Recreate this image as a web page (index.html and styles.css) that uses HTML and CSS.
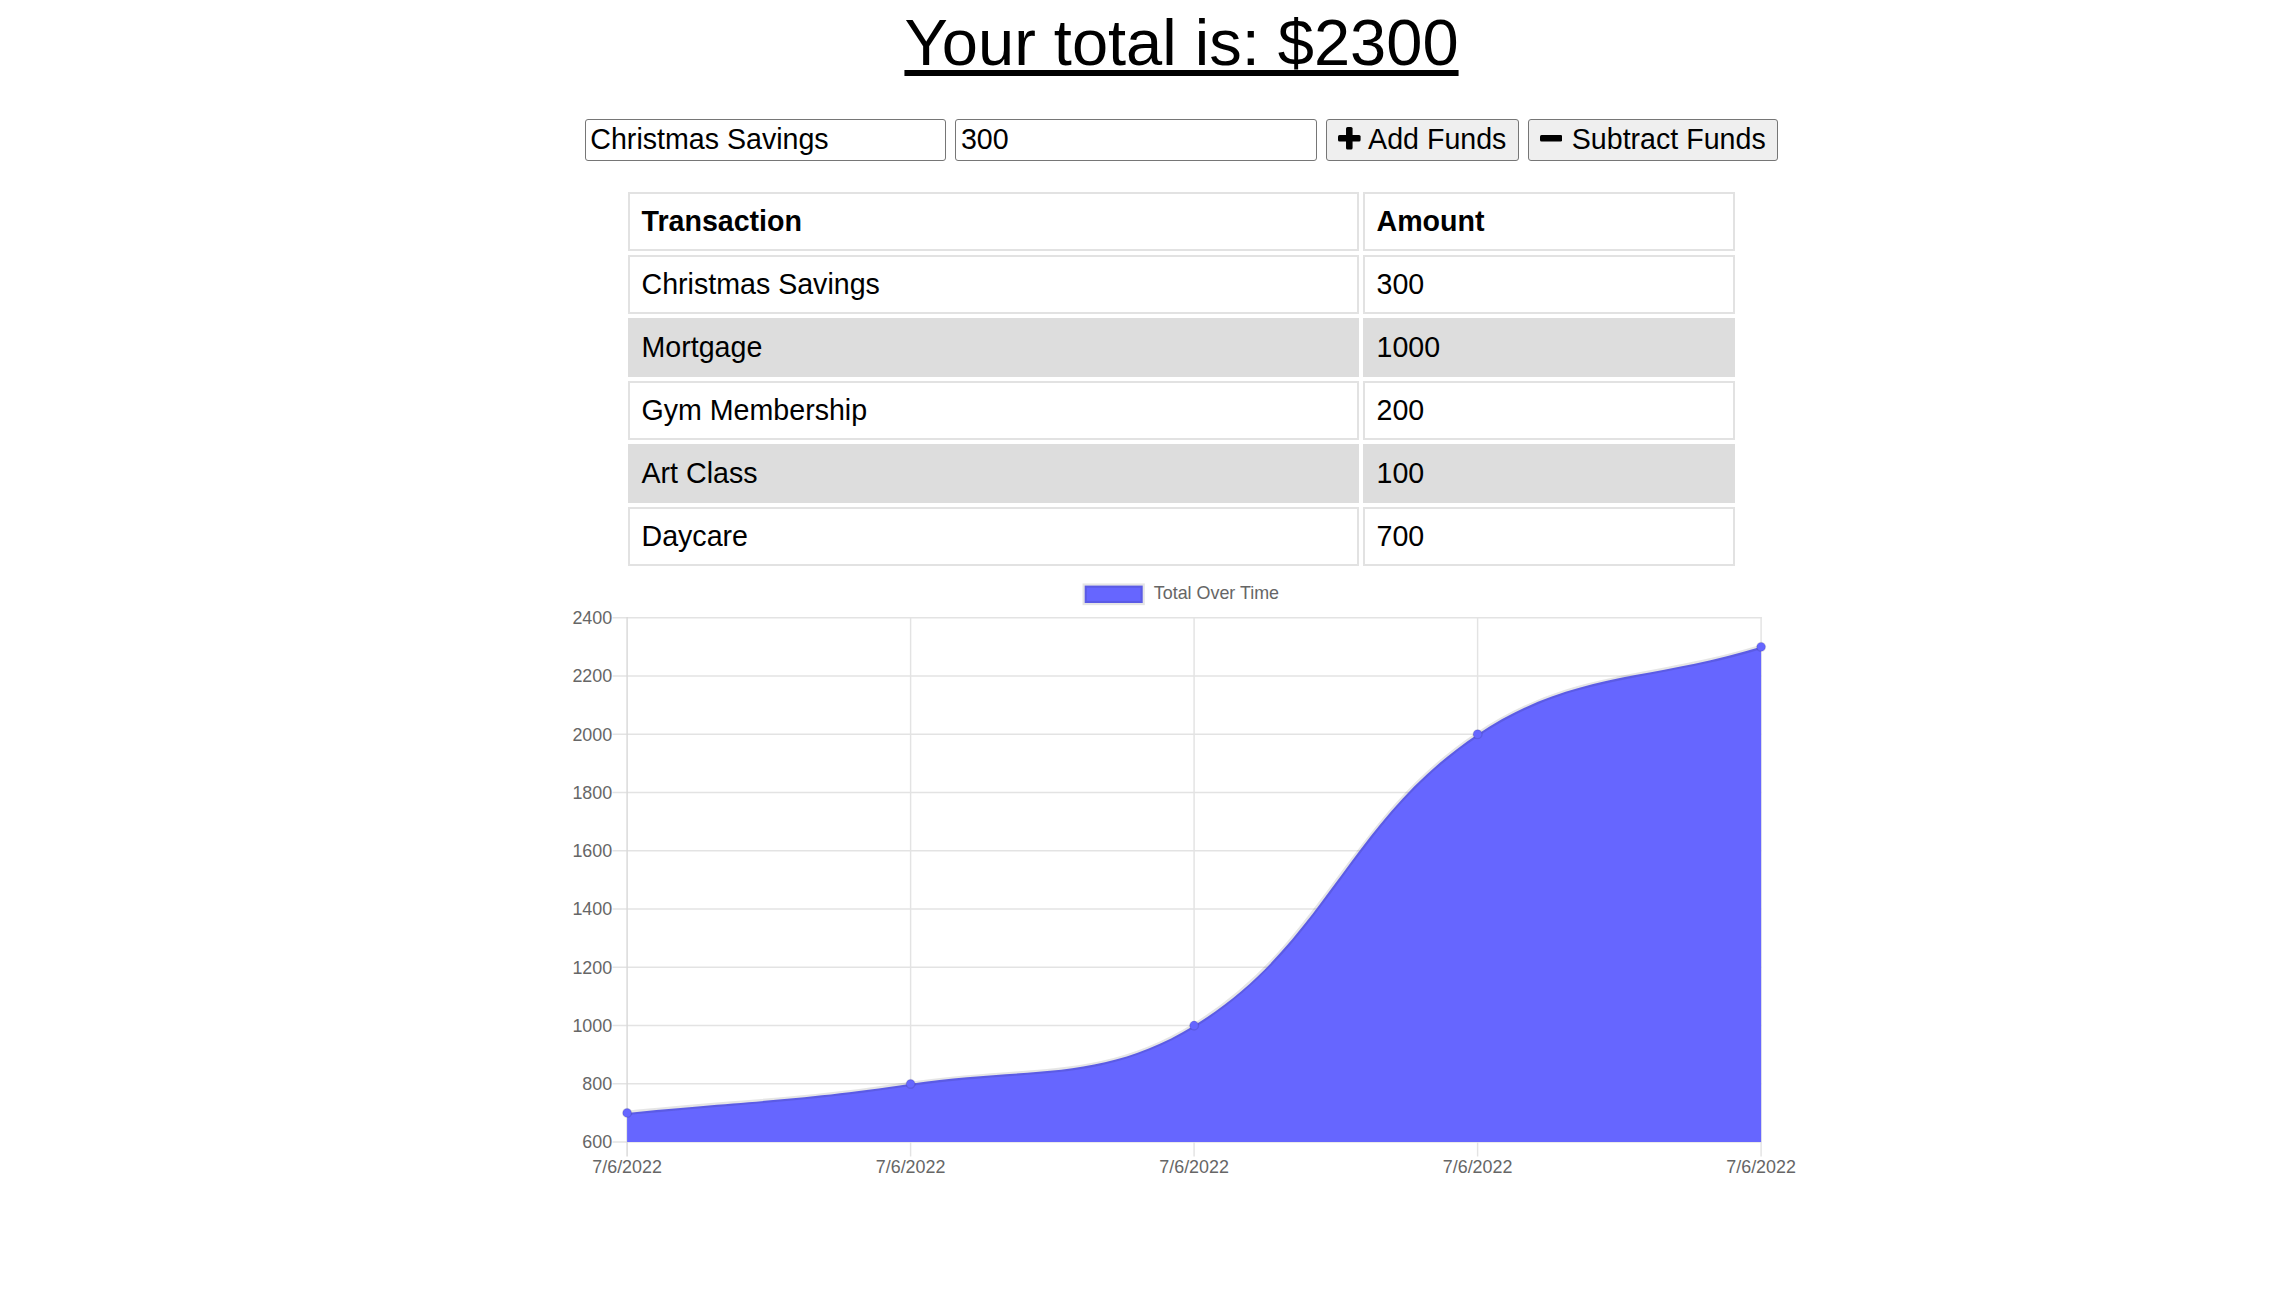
FILE: index.html
```html
<!DOCTYPE html>
<html lang="en">
<head>
<meta charset="utf-8">
<title>Budget Tracker</title>
<link rel="stylesheet" href="styles.css">
</head>
<body>
<main class="page">
  <h1 class="total"><span class="total-text">Your total is: $2300</span></h1>

  <form class="controls">
    <input class="field" type="text" value="Christmas Savings">
    <input class="field" type="text" value="300">
    <button class="btn" type="button"><svg class="ico ico-plus" viewBox="0 0 100 100" aria-hidden="true"><rect x="0" y="35.5" width="100" height="29" rx="7"/><rect x="35.5" y="0" width="29" height="100" rx="7"/></svg><span>Add Funds</span></button>
    <button class="btn" type="button"><svg class="ico ico-minus" viewBox="0 0 100 29" aria-hidden="true"><rect x="0" y="0" width="100" height="29" rx="7"/></svg><span>Subtract Funds</span></button>
  </form>

  <table class="ledger">
    <thead>
      <tr><th class="col-name">Transaction</th><th>Amount</th></tr>
    </thead>
    <tbody>
      <tr><td>Christmas Savings</td><td>300</td></tr>
      <tr><td>Mortgage</td><td>1000</td></tr>
      <tr><td>Gym Membership</td><td>200</td></tr>
      <tr><td>Art Class</td><td>100</td></tr>
      <tr><td>Daycare</td><td>700</td></tr>
    </tbody>
  </table>

  <svg class="chart" viewBox="561.5 570 1240 620" width="1240" height="620">
    <g class="legend">
      <rect x="1084.2" y="585.6" width="58" height="17.4" fill="#6666ff" stroke="rgba(0,0,0,0.1)" stroke-width="4.35"/>
      <text x="1153.3" y="598.6" class="lbl">Total Over Time</text>
    </g>
    <g class="grid" stroke="#e3e3e3" stroke-width="1.45">
      <line x1="612" y1="617.7" x2="1761.3" y2="617.7"/>
      <line x1="612" y1="676.0" x2="1761.3" y2="676.0"/>
      <line x1="612" y1="734.2" x2="1761.3" y2="734.2"/>
      <line x1="612" y1="792.5" x2="1761.3" y2="792.5"/>
      <line x1="612" y1="850.7" x2="1761.3" y2="850.7"/>
      <line x1="612" y1="909.0" x2="1761.3" y2="909.0"/>
      <line x1="612" y1="967.3" x2="1761.3" y2="967.3"/>
      <line x1="612" y1="1025.5" x2="1761.3" y2="1025.5"/>
      <line x1="612" y1="1083.8" x2="1761.3" y2="1083.8"/>
      <line x1="612" y1="1142.0" x2="1761.3" y2="1142.0"/>
      <line x1="626.6" y1="617" x2="626.6" y2="1156.5" stroke="#d9d9d9"/>
      <line x1="910.1" y1="617" x2="910.1" y2="1156.5"/>
      <line x1="1193.6" y1="617" x2="1193.6" y2="1156.5"/>
      <line x1="1477.1" y1="617" x2="1477.1" y2="1156.5"/>
      <line x1="1760.6" y1="617" x2="1760.6" y2="1156.5"/>
    </g>
    <g class="ylabels">
      <text x="611.7" y="624.1" class="lbl" text-anchor="end">2400</text>
      <text x="611.7" y="682.4" class="lbl" text-anchor="end">2200</text>
      <text x="611.7" y="740.6" class="lbl" text-anchor="end">2000</text>
      <text x="611.7" y="798.9" class="lbl" text-anchor="end">1800</text>
      <text x="611.7" y="857.1" class="lbl" text-anchor="end">1600</text>
      <text x="611.7" y="915.4" class="lbl" text-anchor="end">1400</text>
      <text x="611.7" y="973.7" class="lbl" text-anchor="end">1200</text>
      <text x="611.7" y="1031.9" class="lbl" text-anchor="end">1000</text>
      <text x="611.7" y="1090.2" class="lbl" text-anchor="end">800</text>
      <text x="611.7" y="1148.4" class="lbl" text-anchor="end">600</text>
    </g>
    <g class="xlabels">
      <text x="626.6" y="1172.8" class="lbl" text-anchor="middle">7/6/2022</text>
      <text x="910.1" y="1172.8" class="lbl" text-anchor="middle">7/6/2022</text>
      <text x="1193.6" y="1172.8" class="lbl" text-anchor="middle">7/6/2022</text>
      <text x="1477.1" y="1172.8" class="lbl" text-anchor="middle">7/6/2022</text>
      <text x="1760.6" y="1172.8" class="lbl" text-anchor="middle">7/6/2022</text>
    </g>
    <path class="area" d="M626.6,1112.9 C740.0,1101.2 797.6,1101.1 910.1,1083.8 C1024.4,1066.1 1099.3,1083.6 1193.6,1025.5 C1326.1,943.8 1346.0,821.8 1477.1,734.2 C1572.8,670.3 1647.2,681.8 1760.6,646.8 L1760.6,1142 L626.6,1142 Z"/>
    <path class="line" d="M626.6,1112.9 C740.0,1101.2 797.6,1101.1 910.1,1083.8 C1024.4,1066.1 1099.3,1083.6 1193.6,1025.5 C1326.1,943.8 1346.0,821.8 1477.1,734.2 C1572.8,670.3 1647.2,681.8 1760.6,646.8"/>
    <g class="points">
      <circle cx="626.6" cy="1112.9" r="4.4"/>
      <circle cx="910.1" cy="1083.8" r="4.4"/>
      <circle cx="1193.6" cy="1025.5" r="4.4"/>
      <circle cx="1477.1" cy="734.2" r="4.4"/>
      <circle cx="1760.6" cy="646.8" r="4.4"/>
    </g>
  </svg>
</main>
</body>
</html>
```

FILE: styles.css
```css
html, body {
  margin: 0;
  padding: 0;
  background: #ffffff;
}

body {
  font-family: "Liberation Sans", Arial, sans-serif;
  color: #000000;
  padding-left: 84px;
}

.page {
  display: flex;
  flex-direction: column;
  align-items: center;
}

.total {
  margin: 0;
  padding-top: 5.5px;
  font-size: 65px;
  font-weight: 400;
  line-height: 74.5px;
  text-align: center;
}

.total-text {
  text-decoration: underline;
  text-decoration-thickness: 5.5px;
  text-underline-offset: 5px;
}

.controls {
  display: flex;
  align-items: center;
  gap: 9px;
  margin: 39.3px 0 0;
}

.field {
  box-sizing: border-box;
  width: 361.6px;
  height: 41.4px;
  margin: 0;
  padding: 0 4.5px 1px;
  border: 1px solid #767676;
  border-radius: 3px;
  font-family: "Liberation Sans", Arial, sans-serif;
  font-size: 28.6px;
  color: #000000;
  background: #ffffff;
}

.btn {
  box-sizing: border-box;
  display: inline-flex;
  align-items: center;
  height: 41.4px;
  margin: 0;
  padding: 0 11.5px 1px 11px;
  border: 1px solid #767676;
  border-radius: 3px;
  background: #efefef;
  font-family: "Liberation Sans", Arial, sans-serif;
  font-size: 28.6px;
  color: #000000;
  white-space: nowrap;
}

.ico {
  display: block;
  fill: #000000;
  margin-right: 7.5px;
  margin-top: -2px;
  flex: none;
}

.ico-plus {
  width: 22.6px;
  height: 22.6px;
}

.ico-minus {
  width: 22.4px;
  height: 6.5px;
  margin-right: 9.5px;
}

.ledger {
  box-sizing: border-box;
  width: 1115px;
  margin-top: 27.6px;
  border-collapse: separate;
  border-spacing: 4px;
  table-layout: fixed;
  font-size: 28.6px;
}

.ledger th,
.ledger td {
  box-sizing: border-box;
  height: 59px;
  padding: 0 11.5px;
  border: 2px solid #e2e2e2;
  text-align: left;
  vertical-align: middle;
  line-height: 33px;
  background: #ffffff;
}

.ledger th {
  font-weight: 700;
}

.ledger .col-name {
  width: 731px;
}

.ledger tbody tr:nth-child(even) td {
  background: #dddddd;
  border-color: #dddddd;
}

.chart {
  display: block;
  flex: none;
}

.chart .lbl {
  font-family: "Liberation Sans", Arial, sans-serif;
  font-size: 17.9px;
  fill: #666666;
}

.chart .area {
  fill: #6666ff;
}

.chart .line {
  fill: none;
  stroke: rgba(0, 0, 0, 0.1);
  stroke-width: 4.35;
}

.chart .points circle {
  fill: #6666ff;
  stroke: rgba(0, 0, 0, 0.1);
  stroke-width: 1.45;
}
```
